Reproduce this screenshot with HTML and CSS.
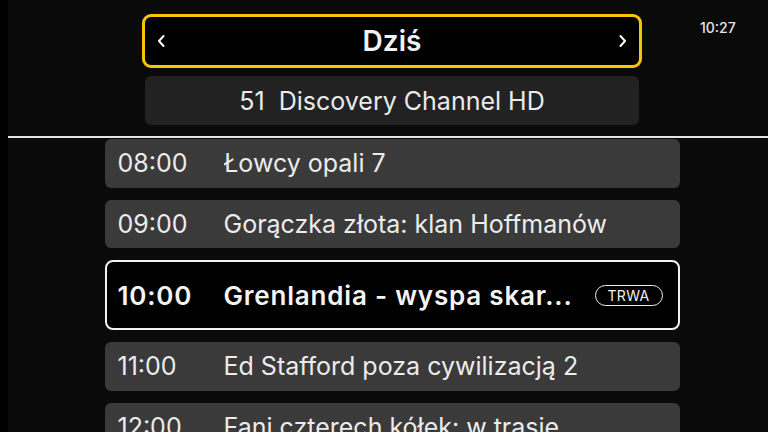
FILE: index.html
```html
<!DOCTYPE html>
<html lang="pl">
<head>
<meta charset="utf-8">
<link rel="stylesheet" href="styles.css">
</head>
<body>
<div class="app">
  <div class="clock">10:27</div>
  <header class="header">
    <div class="day-picker">
      <svg class="chev" width="10" height="14" viewBox="0 0 10 14"><path d="M6.5 2 L2 7 L6.5 12" fill="none" stroke="#fff" stroke-width="2" stroke-linecap="round" stroke-linejoin="round"/></svg>
      <span class="day">Dziś</span>
      <svg class="chev" width="10" height="14" viewBox="0 0 10 14"><path d="M3.5 2 L8 7 L3.5 12" fill="none" stroke="#fff" stroke-width="2" stroke-linecap="round" stroke-linejoin="round"/></svg>
    </div>
    <div class="channel">51&nbsp;&nbsp;Discovery Channel HD</div>
  </header>
  <div class="divider"></div>
  <ul class="epg">
    <li class="row"><span class="time">08:00</span><span class="title">Łowcy opali 7</span></li>
    <li class="row"><span class="time">09:00</span><span class="title">Gorączka złota: klan Hoffmanów</span></li>
    <li class="row current"><span class="time">10:00</span><span class="title">Grenlandia - wyspa skar...</span><span class="badge">TRWA</span></li>
    <li class="row"><span class="time">11:00</span><span class="title">Ed Stafford poza cywilizacją 2</span></li>
    <li class="row"><span class="time">12:00</span><span class="title">Fani czterech kółek: w trasie</span></li>
  </ul>
</div>
</body>
</html>
```
FILE: styles.css
```css
html, body {
  margin: 0;
  padding: 0;
  background: #000;
  overflow: hidden;
  height: 432px;
}
body {
  font-family: "Inter", "Noto Sans", sans-serif;
  color: #eeeeee;
}
.app {
  position: relative;
  margin-left: 8px;
  width: 768px;
  height: 432px;
  background: #0a0a0a;
  display: flex;
  flex-direction: column;
  align-items: center;
}
.app > * {
  flex-shrink: 0;
}
.clock {
  position: absolute;
  top: 19px;
  left: 692px;
  font-size: 14px;
  font-weight: 500;
  color: #e6e6e6;
}
.header {
  display: flex;
  flex-direction: column;
  align-items: center;
  padding-top: 14px;
  gap: 8px;
}
.day-picker {
  box-sizing: border-box;
  width: 500px;
  height: 54px;
  border: 3px solid #f7c600;
  border-radius: 9px;
  background: #000;
  display: flex;
  align-items: center;
  justify-content: space-between;
  padding: 0 12px 0 12px;
}
.day {
  font-size: 28px;
  font-weight: 600;
  color: #f2f2f2;
}
.channel {
  box-sizing: border-box;
  width: 494px;
  height: 49px;
  border-radius: 6px;
  background: #222222;
  display: flex;
  align-items: center;
  justify-content: center;
  font-size: 25px;
  color: #eaeaea;
}
.divider {
  align-self: stretch;
  height: 2px;
  margin-top: 11px;
  background: #e2e2e2;
}
.epg {
  list-style: none;
  margin: 1px 0 0 0;
  padding: 0;
  width: 575px;
  display: flex;
  flex-direction: column;
  gap: 12px;
}
.row {
  box-sizing: border-box;
  height: 48.5px;
  flex: none;
  border-radius: 6px;
  background: #3a3a3a;
  display: flex;
  align-items: center;
  padding: 0 16px 0 13px;
  font-size: 25px;
  color: #ececec;
}
.time {
  width: 106px;
  flex: none;
}
.title {
  flex: 1;
  white-space: nowrap;
  overflow: hidden;
}
.row.current {
  height: 70px;
  background: #000;
  border: 2px solid #f2f2f2;
  border-radius: 8px;
  padding: 0 15px 0 11px;
  font-weight: 600;
  font-size: 26px;
  letter-spacing: 0.8px;
  color: #f4f4f4;
}
.badge {
  flex: none;
  box-sizing: border-box;
  height: 21px;
  width: 68px;
  border: 1.5px solid #f0f0f0;
  border-radius: 11px;
  display: flex;
  align-items: center;
  justify-content: center;
  font-size: 14px;
  font-weight: 400;
  letter-spacing: 0.3px;
  color: #f0f0f0;
}
```
